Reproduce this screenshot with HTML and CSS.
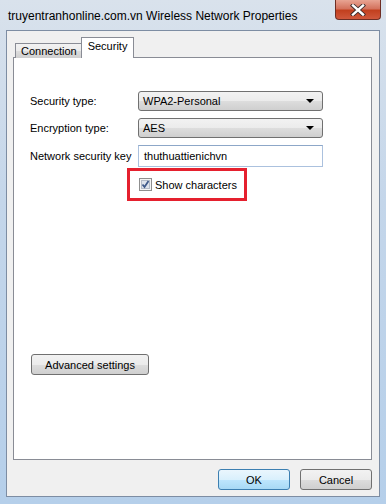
FILE: index.html
```html
<!DOCTYPE html>
<html lang="en">
<head>
    <meta charset="UTF-8">
    <title>Wireless Network Properties</title>
    <link rel="stylesheet" href="styles.css">
</head>
<body>
    <div class="window">
        <div class="title-bar">
            <span class="title">truyentranhonline.com.vn Wireless Network Properties</span>
            <span class="close-btn">
                <svg width="16" height="12" viewBox="0 0 16 12">
                    <path d="M3 1.5 L13 10.5 M13 1.5 L3 10.5" stroke="#3b2b2b" stroke-width="4.2" stroke-linecap="square"/>
                    <path d="M3 1.5 L13 10.5 M13 1.5 L3 10.5" stroke="#ffffff" stroke-width="2.4" stroke-linecap="square"/>
                </svg>
            </span>
        </div>

        <div class="client">
            <div class="tabs">
                <span class="tab">Connection</span>
                <span class="tab active">Security</span>
            </div>

            <div class="panel">
                <div class="form-row">
                    <span class="label">Security type:</span>
                    <div class="combo"><span>WPA2-Personal</span><span class="arrow"></span></div>
                </div>
                <div class="form-row">
                    <span class="label">Encryption type:</span>
                    <div class="combo"><span>AES</span><span class="arrow"></span></div>
                </div>
                <div class="form-row">
                    <span class="label">Network security key</span>
                    <div class="textbox">thuthuattienichvn</div>
                </div>

                <div class="check-row">
                    <div class="highlight">
                        <span class="checkbox">
                            <svg width="13" height="13" viewBox="0 0 13 13">
                                <rect x="0.5" y="0.5" width="12" height="12" fill="#f4f4f4" stroke="#8f8f8f"/>
                                <rect x="2.5" y="2.5" width="8" height="8" fill="#dde3ec" stroke="#b4bcc8"/>
                                <path d="M3.5 6.5 L5.5 9 L9.5 3" fill="none" stroke="#3f5a8a" stroke-width="1.8"/>
                            </svg>
                        </span>
                        <span>Show characters</span>
                    </div>
                </div>

                <div class="spacer"></div>

                <button class="btn advanced">Advanced settings</button>
            </div>

            <div class="dialog-buttons">
                <button class="btn default">OK</button>
                <button class="btn">Cancel</button>
            </div>
        </div>
    </div>
</body>
</html>
```

FILE: styles.css
```css
body {
    margin: 0;
    font-family: 'Liberation Sans', Arial, sans-serif;
    font-size: 11px;
    color: #000;
}
.window {
    width: 386px;
    height: 504px;
    box-sizing: border-box;
    padding: 0 6px 7px 6px;
    display: flex;
    flex-direction: column;
    background: linear-gradient(180deg, #d9e2ec 0%, #c4d6ea 40%, #b5cfea 100%);
    overflow: hidden;
}
.title-bar {
    height: 30px;
    display: flex;
    justify-content: space-between;
    align-items: flex-start;
    flex-shrink: 0;
}
.title {
    margin-top: 9px;
    margin-left: 2px;
    font-size: 12px;
    white-space: nowrap;
    color: #000;
}
.close-btn {
    width: 46px;
    height: 20px;
    box-sizing: border-box;
    display: flex;
    align-items: center;
    justify-content: center;
    background: linear-gradient(180deg, #e8a493 0%, #d4735e 45%, #c2401f 55%, #d0583c 100%);
    border: 1px solid #6e2e24;
    border-top: none;
    border-radius: 0 0 4px 4px;
    margin-right: -1px;
}
.client {
    flex: 1;
    background: #f0f0f0;
    border: 1px solid #7d8da3;
    display: flex;
    flex-direction: column;
    padding: 7px 7px 7px 6px;
}
.tabs {
    display: flex;
    align-items: flex-end;
    padding-left: 2px;
    height: 20px;
    position: relative;
    z-index: 1;
    margin-bottom: -1px;
}
.tab {
    height: 14px;
    padding: 0 4px 0 5px;
    line-height: 14px;
    font-size: 11px;
    border: 1px solid #898c95;
    border-bottom: none;
    background: linear-gradient(180deg, #f2f2f2 0%, #ebebeb 50%, #dddddd 51%, #cfcfcf 100%);
}
.tab + .tab {
    margin-left: -1px;
}
.tab.active {
    height: 20px;
    line-height: 16px;
    padding: 0 6px;
    background: #fff;
}
.panel {
    flex: 1;
    background: #fff;
    border: 1px solid #898c95;
    display: flex;
    flex-direction: column;
    padding: 33px 0 84px 16px;
}
.form-row {
    display: flex;
    align-items: center;
    margin-bottom: 7px;
}
.label {
    width: 108px;
    font-size: 11px;
}
.combo {
    width: 185px;
    height: 20px;
    box-sizing: border-box;
    border: 1px solid #707070;
    border-radius: 3px;
    background: linear-gradient(180deg, #f2f2f2 0%, #ebebeb 50%, #dddddd 51%, #cfcfcf 100%);
    display: flex;
    align-items: center;
    justify-content: space-between;
    padding: 0 8px 0 4px;
    font-size: 11px;
}
.arrow {
    width: 0;
    height: 0;
    border-left: 4px solid transparent;
    border-right: 4px solid transparent;
    border-top: 4px solid #000;
}
.textbox {
    width: 185px;
    height: 22px;
    box-sizing: border-box;
    border: 1px solid #abc1de;
    border-top-color: #8da7c8;
    background: #fff;
    padding: 0 5px;
    line-height: 20px;
    font-size: 11px;
}
.check-row {
    display: flex;
    padding-left: 97px;
    margin-top: -6px;
}
.highlight {
    width: 120px;
    height: 33px;
    box-sizing: border-box;
    border: 3px solid #e5202e;
    display: flex;
    align-items: center;
    padding-left: 9px;
    gap: 3px;
    font-size: 11px;
}
.checkbox {
    display: flex;
}
.spacer {
    flex: 1;
}
.btn {
    font-family: inherit;
    font-size: 11px;
    height: 21px;
    border: 1px solid #707070;
    border-radius: 3px;
    background: linear-gradient(180deg, #f2f2f2 0%, #ebebeb 50%, #dddddd 51%, #cfcfcf 100%);
    padding: 0;
    color: #000;
}
.advanced {
    width: 118px;
    margin-left: 1px;
    align-self: flex-start;
}
.dialog-buttons {
    display: flex;
    justify-content: flex-end;
    gap: 10px;
    padding-top: 9px;
    height: 29px;
    box-sizing: border-box;
}
.dialog-buttons .btn {
    width: 72px;
    height: 21px;
}
.btn.default {
    border-color: #3c7fb1;
    background: linear-gradient(180deg, #eaf6fd 0%, #d9f0fc 50%, #bee6fd 51%, #a7d9f5 100%);
}
```
